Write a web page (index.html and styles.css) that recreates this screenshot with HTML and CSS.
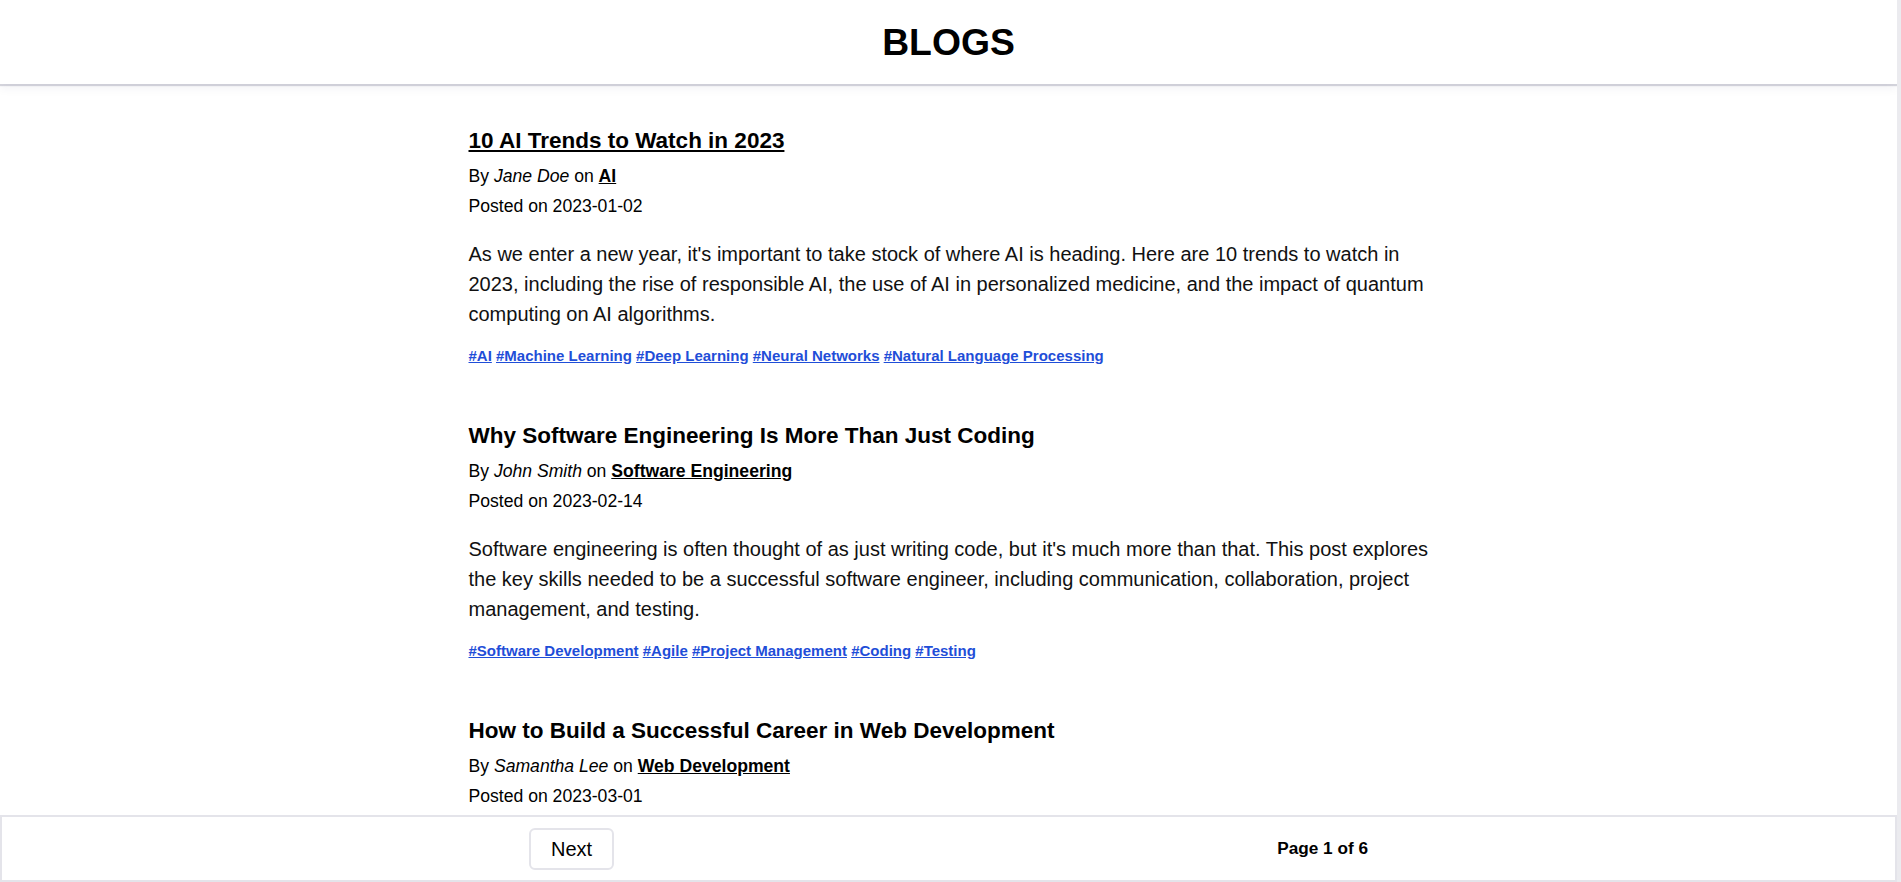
FILE: index.html
```html
<!DOCTYPE html>
<html lang="en">
<head>
<meta charset="utf-8">
<title>Blogs</title>
<link rel="stylesheet" href="styles.css">
</head>
<body>
<div class="app">
  <header class="site-header">
    <h1 class="site-title">BLOGS</h1>
  </header>
  <main class="content">
    <div class="posts">
      <article class="post">
        <h2 class="post-title"><a href="#" class="post-link is-active">10 AI Trends to Watch in 2023</a></h2>
        <p class="post-meta">By <em>Jane Doe</em> on <a href="#" class="category">AI</a></p>
        <p class="post-meta">Posted on 2023-01-02</p>
        <p class="post-body">As we enter a new year, it's important to take stock of where AI is heading. Here are 10 trends to watch in 2023, including the rise of responsible AI, the use of AI in personalized medicine, and the impact of quantum computing on AI algorithms.</p>
        <p class="post-tags"><a href="#" class="tag">#AI</a> <a href="#" class="tag">#Machine Learning</a> <a href="#" class="tag">#Deep Learning</a> <a href="#" class="tag">#Neural Networks</a> <a href="#" class="tag">#Natural Language Processing</a></p>
      </article>
      <article class="post">
        <h2 class="post-title"><a href="#" class="post-link">Why Software Engineering Is More Than Just Coding</a></h2>
        <p class="post-meta">By <em>John Smith</em> on <a href="#" class="category">Software Engineering</a></p>
        <p class="post-meta">Posted on 2023-02-14</p>
        <p class="post-body">Software engineering is often thought of as just writing code, but it's much more than that. This post explores the key skills needed to be a successful software engineer, including communication, collaboration, project management, and testing.</p>
        <p class="post-tags"><a href="#" class="tag">#Software Development</a> <a href="#" class="tag">#Agile</a> <a href="#" class="tag">#Project Management</a> <a href="#" class="tag">#Coding</a> <a href="#" class="tag">#Testing</a></p>
      </article>
      <article class="post">
        <h2 class="post-title"><a href="#" class="post-link">How to Build a Successful Career in Web Development</a></h2>
        <p class="post-meta">By <em>Samantha Lee</em> on <a href="#" class="category">Web Development</a></p>
        <p class="post-meta">Posted on 2023-03-01</p>
      </article>
    </div>
  </main>
  <footer class="pager">
    <div class="pager-inner">
      <button class="pager-btn" type="button">Next</button>
      <span class="pager-count">Page 1 of 6</span>
    </div>
  </footer>
</div>
</body>
</html>
```

FILE: styles.css
```css
html, body {
  margin: 0;
  padding: 0;
  height: 100%;
}

body {
  background: #ebebef;
  font-family: "Liberation Sans", Arial, sans-serif;
  color: #000;
}

.app {
  width: calc(100% - 4px);
  height: 100vh;
  display: flex;
  flex-direction: column;
  background: #fff;
  overflow: hidden;
}

.site-header {
  flex: 0 0 84px;
  display: flex;
  align-items: center;
  justify-content: center;
  background: #fff;
  box-shadow: 0 2px 1px rgba(40, 40, 80, 0.18), 0 4px 10px rgba(40, 40, 80, 0.06);
  position: relative;
  z-index: 1;
}

.site-title {
  margin: 0;
  font-size: 37.3px;
  font-weight: 700;
  letter-spacing: 0;
}

.content {
  flex: 1 1 auto;
  overflow: hidden;
  padding-top: 44px;
}

.posts {
  max-width: 960px;
  margin: 0 auto;
}

.post {
  margin-bottom: 59px;
}

.post-title {
  margin: 0 0 7px;
  font-size: 22.5px;
  line-height: 26px;
  font-weight: 700;
}

.post-link {
  color: #000;
  text-decoration: none;
}

.post-link.is-active {
  text-decoration: underline;
}

.post-meta {
  margin: 0;
  font-size: 17.6px;
  line-height: 30px;
}

.category {
  color: #000;
  font-weight: 700;
  text-decoration: underline;
}

.post-body {
  margin: 18px 0 18px;
  font-size: 20px;
  line-height: 30px;
  color: #111;
}

.post-tags {
  margin: 0;
  font-size: 15px;
  line-height: 17px;
  font-weight: 700;
}

.tag {
  color: #1f4ed8;
  text-decoration: underline;
}

.pager {
  flex: 0 0 67px;
  box-sizing: border-box;
  border: 2px solid #e4e4ea;
  background: #fff;
  display: flex;
  align-items: center;
}

.pager-inner {
  width: 839px;
  margin: 0 auto;
  display: flex;
  align-items: center;
  justify-content: space-between;
}

.pager-btn {
  font-family: "Liberation Sans", Arial, sans-serif;
  font-size: 20px;
  line-height: 24px;
  color: #000;
  background: #fff;
  border: 2px solid #e4e4ea;
  border-radius: 6px;
  padding: 7px 20px;
  cursor: pointer;
}

.pager-count {
  font-size: 17.2px;
  font-weight: 700;
}
```
